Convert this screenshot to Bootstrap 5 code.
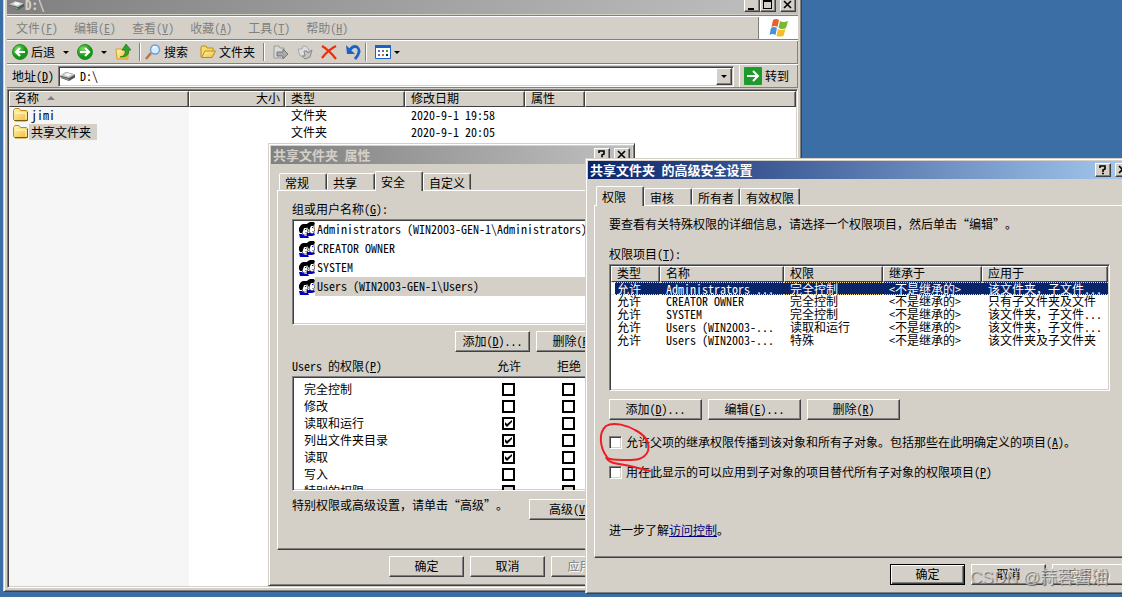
<!DOCTYPE html>
<html lang="zh-CN">
<head>
<meta charset="utf-8">
<meta name="viewport" content="width=device-width, initial-scale=1">
<title>D:\</title>
<link href="https://cdn.jsdelivr.net/npm/bootstrap@5.3.0/dist/css/bootstrap.min.css" rel="stylesheet">
<style>
:root { --face:#d4d0c8; --shade:#808080; --dark:#404040; --navy:#0a246a; }
body { font:12px/16px "Noto Sans CJK SC",sans-serif; font-feature-settings:"hwid"; color:#000; background:#3a6ea5; white-space:nowrap; }
.full { font-feature-settings:normal; }
button, input { font:inherit; font-feature-settings:inherit; color:inherit; }
.desktop { height:100vh; }
.win { background:var(--face); padding:2px; border:1px solid; border-color:var(--face) var(--dark) var(--dark) var(--face); box-shadow:inset 1px 1px #fff, inset -1px -1px var(--shade); }
.win-explorer { left:3px; right:320px; top:-8px; bottom:5px; padding:3px; }
.win-props { left:268px; top:143px; width:367px; }
.win-adv { left:585px; top:158px; width:551px; }
.title { height:18px; padding:0 2px; font-size:13px; font-weight:700; color:var(--face); background:linear-gradient(90deg,#808080,#c0c0c0); }
.title.active { color:#fff; background:linear-gradient(90deg,#0a246a,#a6caf0); }
.cap { width:16px; height:14px; }
.btn3 { background:var(--face); border:1px solid; border-color:#fff var(--dark) var(--dark) #fff; box-shadow:inset -1px -1px var(--shade); padding:0; border-radius:0; }
.push { width:75px; height:21px; line-height:16px; padding-bottom:2px; }
.push.wide { width:93px; }
.push.mid { width:82px; margin-top:2px; }
.push.default { border-color:#000; box-shadow:inset 1px 1px #fff, inset -1px -1px var(--dark), inset -2px -2px var(--shade); }
.push:disabled { color:var(--shade); text-shadow:1px 1px #fff; }
.btn-row { display:flex; gap:6px; margin-top:6px; }
.rebar { border-top:1px solid var(--shade); margin-top:1px; box-shadow:inset -1px 0 var(--shade); }
.band { height:24px; border-top:1px solid #fff; border-bottom:1px solid var(--shade); padding:0 1px 0 5px; }
.menu { gap:16px; padding-left:4px; color:var(--shade); }
.menu a { color:inherit; text-decoration:none; }
.brand { width:40px; background:#fff; border-left:1px solid var(--shade); }
.tool { background:none; border:0; padding:0; gap:3px; display:flex; align-items:center; }
.rule { width:2px; height:18px; border-left:1px solid var(--shade); border-right:1px solid #fff; }
.caret { width:0; height:0; border:3px solid transparent; border-top-color:#000; border-bottom:0; }
.sunken { background:#fff; border:1px solid; border-color:var(--shade) #fff #fff var(--shade); box-shadow:inset 1px 1px var(--dark), inset -1px -1px var(--face); padding:1px; }
.addr { height:21px; margin-right:4px; }
.addr input { border:0; outline:0; padding:0; background:none; min-width:0; }
.files { margin-top:1px; background:linear-gradient(90deg,#f6f6f6 181px,#fff 181px); }
.grid { table-layout:fixed; width:100%; border-collapse:separate; border-spacing:0; }
.grid thead th { height:16px; line-height:12px; padding:0 0 2px 5px; font-weight:400; background:var(--face); border:1px solid; border-color:#fff var(--dark) var(--dark) #fff; box-shadow:inset -1px 0 var(--shade); }
.grid td { padding:0 0 0 6px; overflow:hidden; }
.files td { height:17px; line-height:16px; padding-bottom:1px; }
.files td:first-child { padding-left:4px; }
.fname { padding:0 6px 0 2px; }
.fname.pick { background:var(--face); }
.grid.aces td { height:13px; line-height:11px; padding-bottom:2px; overflow:visible; }
.grid.aces .sel td { color:#fff; background:var(--navy); border-top:1px dotted #f5db95; border-bottom:1px dotted #f5db95; padding-bottom:0; }
.grid.aces .sel td:first-child { background:linear-gradient(90deg,#fff 4px,var(--navy) 4px); }
.pane { padding:7px 6px 6px; }
.tabs { padding-left:2px; border:0; }
.tabs .nav-link { width:48px; height:17px; padding:0 5px; line-height:18px; color:#000; text-align:left; background:var(--face); border:1px solid; border-color:#fff var(--dark) transparent #fff; border-radius:2px 2px 0 0; box-shadow:inset -1px 0 var(--shade); margin:0; }
.tabs .nav-link.active { height:20px; margin-bottom:-1px; border-bottom:0; border-color:#fff var(--dark) #fff #fff; color:#000; background:var(--face); position:relative; }
.tabs .tab-l { width:60px; }
.sheet { border:1px solid; border-color:#fff var(--dark) var(--dark) #fff; box-shadow:inset -1px -1px var(--shade); padding:10px 14px 29px; }
.sheet-adv { padding:10px 16px 19px 14px; }
.gap-s { margin-top:2px; } .gap-m { margin-top:6px; } .gap-l { margin-top:14px; } .gap-xl { margin-top:42px; }
.sunken.people { height:106px; padding-top:0; }
.person { height:19px; padding-left:5px; }
.person span { line-height:17px; padding:0 0 2px 2px; }
.person.sel span { background:var(--face); flex:1; }
.perm { height:115px; overflow:hidden; padding:4px 12px 0 1px; }
.perm th { font-weight:400; padding:0 0 2px 10px; height:17px; line-height:15px; }
.perm td { padding:0; text-align:center; width:60px; }
.perm-head { margin-right:12px; }
.perm-head span + span { width:60px; text-align:center; }
.ace-box { height:127px; }
input[type=checkbox] { appearance:none; width:13px; height:13px; background:#fff; margin:0; display:block; flex:none; }
.perm input { border:2px solid #000; margin:2px auto; }
.perm input:checked { background:#fff url("data:image/svg+xml,%3Csvg xmlns='http://www.w3.org/2000/svg' viewBox='0 0 9 9'%3E%3Cpath d='M1 3v3l2 2 5-5V1L3 5z'/%3E%3C/svg%3E"); }
.perm input:disabled { background-color:var(--face); }
.opt input { border:1px solid; border-color:var(--shade) #fff #fff var(--shade); box-shadow:inset 1px 1px var(--dark), inset -1px -1px var(--face); }
.more a { color:#00007f; }
.note-ring { left:598px; top:421px; }
.credit { right:14px; bottom:6px; font:17px/26px "Liberation Sans","Noto Sans CJK SC",sans-serif; font-feature-settings:normal; color:rgba(225,225,225,.7); text-shadow:1px 1px 1px #666; pointer-events:none; }
svg { flex:none; display:block; }
</style>
</head>
<body>
<svg width="0" height="0" class="position-absolute" aria-hidden="true">
<defs>
<linearGradient id="gold" x2="1" y2="1"><stop stop-color="#fff7b0"/><stop offset="1" stop-color="#f0b93a"/></linearGradient>
<radialGradient id="green" cx=".35" cy=".3"><stop stop-color="#7fdc62"/><stop offset="1" stop-color="#16951c"/></radialGradient>
<symbol id="drive" viewBox="0 0 16 16"><path d="M0 8l6-4 9 2.500v3L9 13 1 10z" fill="#555"/><path d="M0 7.500L6 4l9 2.500L9 10z" fill="#c4c4c4"/><path d="M4 7l3-2 5 1.500L8 8.500z" fill="#f8f8f8"/><path d="M1 8.500l8 2.500v1.500L1 10z" fill="#888"/><path d="M6.500 10.800l2 .6" stroke="#3c3" /></symbol>
<symbol id="folder" viewBox="0 0 16 16"><path d="M.5 12.500v-9l1.500-2h4l1.500 2h6l1 1v8.500l-1 1H2z" fill="url(#gold)" stroke="#b98a1e"/><path d="M2.500 6h10.500v6.500" fill="none" stroke="#fffbd2"/><path d="M2 13.500h12.500V5" fill="none" stroke="#7a5a10"/></symbol>
<symbol id="openfolder" viewBox="0 0 16 16"><path d="M1 13V3l1-1h4l1 2h6v3" fill="#f9dc6b" stroke="#b98a1e"/><path d="M1.500 13.500L5 7h10.500L12 13.500z" fill="url(#gold)" stroke="#b98a1e"/></symbol>
<symbol id="people" viewBox="0 0 16 16"><path d="M8 11h7l1 2-3 1H8z" fill="#0000c0"/><path d="M11 3h4v3l1 2-1 1v2l-2 1-3-2z" fill="#fff" stroke="#000" stroke-width=".6"/><path d="M7 3l2-2 2-1h4l1 2-2 2h-2l-1 2-1 2-2-3z"/><path d="M4 6l4-1v2l1 3-1 1v2H5l-2-2z" fill="#fff" stroke="#000" stroke-width=".6"/><path d="M0 6l2-3 2-1h4l1 2-2 2H5L4 9l-1 2H1L0 9z"/><path d="M0 12h3l3 2h3l1 2H1z" fill="#0000c0"/><path d="M6 7h1v1H6zm7-2h1v1h-1z" fill="#00f"/><path d="M6 10h2v1H6zm7-1h2v1h-2z" fill="#999"/></symbol>
</defs>
</svg>
<main class="desktop position-relative overflow-hidden">

<section class="win win-explorer position-absolute d-flex flex-column" aria-label="D:\">
  <header class="title d-flex align-items-center">
    <svg width="16" height="16"><use href="#drive"/></svg><span class="flex-fill">D:\</span>
    <button class="btn3 cap" aria-label="最小化"><svg width="14" height="12"><path d="M3 9h6v2H3z"/></svg></button>
    <button class="btn3 cap" aria-label="最大化"><svg width="14" height="12"><path d="M2 1h9v9H2zM3 3v6h7V3z" fill-rule="evenodd"/></svg></button>
    <button class="btn3 cap ms-1" aria-label="关闭"><svg width="14" height="12"><path d="M3 2l7 7M10 2L3 9" stroke="#000" stroke-width="1.600"/></svg></button>
  </header>
  <div class="rebar">
    <div class="band d-flex pe-0">
      <nav class="menu d-flex align-items-center flex-fill">
        <a href="#">文件(<u>F</u>)</a><a href="#">编辑(<u>E</u>)</a><a href="#">查看(<u>V</u>)</a><a href="#">收藏(<u>A</u>)</a><a href="#">工具(<u>T</u>)</a><a href="#">帮助(<u>H</u>)</a>
      </nav>
      <div class="brand d-flex align-items-center justify-content-center">
        <svg width="20" height="20" viewBox="0 0 20 20"><path d="M4 2q3-2 6 0L8.500 9q-3-2-6 0z" fill="#e8602c"/><path d="M11 3q3 2 8 0l-2 7q-4 2-7.500 0z" fill="#78b832"/><path d="M2 10q3-2 6 0l-1.500 7q-3-2-6 0z" fill="#4a8fd8"/><path d="M9 11q3 2 7.500 0l-2 7q-4 1-7 0z" fill="#f6be28"/></svg>
      </div>
    </div>
    <div class="band d-flex align-items-center">
      <button class="tool"><svg width="16" height="16" viewBox="0 0 16 16"><circle cx="8" cy="8" r="7.500" fill="url(#green)" stroke="#2a8a24"/><path d="M13 8H4m4-4L4 8l4 4" fill="none" stroke="#fff" stroke-width="2.200"/></svg>后退</button>
      <span class="caret mx-2"></span>
      <button class="tool" aria-label="前进"><svg width="16" height="16" viewBox="0 0 16 16"><circle cx="8" cy="8" r="7.500" fill="url(#green)" stroke="#2a8a24"/><path d="M3 8h9M8 4l4 4-4 4" fill="none" stroke="#fff" stroke-width="2.200"/></svg></button>
      <span class="caret mx-2"></span>
      <button class="tool" aria-label="向上"><svg width="16" height="16" viewBox="0 0 16 16"><path d="M1 5h5l1 1h6v9H2z" fill="url(#gold)" stroke="#d0a030"/><path d="M5 13q6-1 5-7H7l4-6 5 6h-2q0 8-9 7z" fill="#2da32a" stroke="#156b15" stroke-width=".6"/></svg></button>
      <span class="rule ms-2 me-1"></span>
      <button class="tool"><svg width="16" height="16" viewBox="0 0 16 16"><path d="M1 15l5-6" stroke="#b9754a" stroke-width="2.500"/><circle cx="10" cy="5.500" r="4.500" fill="#d4eefc" stroke="#6f9cd0" stroke-width="1.400"/><path d="M8 4q1-2 3-1" fill="none" stroke="#fff"/></svg>搜索</button>
      <button class="tool ms-2 ps-1"><svg width="16" height="16"><use href="#openfolder"/></svg>文件夹</button>
      <span class="rule mx-2"></span>
      <button class="tool" aria-label="移至"><svg width="16" height="16" viewBox="0 0 16 16"><path d="M1 2h5l1 2h4v10H1z" fill="#d8d8d8" stroke="#999"/><path d="M4 8h6V5l5 5-5 5v-3H4z" fill="#aaa" stroke="#777"/></svg></button>
      <button class="tool ms-2" aria-label="复制到"><svg width="16" height="16" viewBox="0 0 16 16"><path d="M1 5h4l1-3h3l3 4v6H3z" fill="#ddd" stroke="#aaa"/><path d="M7 7h3l1 2 4-3-2 7-5 2-3-3h3z" fill="#c4c4c4" stroke="#888"/></svg></button>
      <button class="tool ms-2" aria-label="删除"><svg width="16" height="16" viewBox="0 0 16 16"><path d="M1 2q7 4 14 13M15 2Q7 6 1 14" fill="none" stroke="#e8300c" stroke-width="2.200"/></svg></button>
      <button class="tool ms-2" aria-label="撤消"><svg width="16" height="16" viewBox="0 0 16 16"><path d="M4 7q4-6 8-4 5 4-2 12" fill="none" stroke="#1e62c4" stroke-width="2.800"/><path d="M1 1l1 9h8z" fill="#1e62c4"/></svg></button>
      <span class="rule ms-1 me-2"></span>
      <button class="tool" aria-label="查看"><svg width="16" height="16" viewBox="0 0 16 16"><path d="M.5 1.500h15v13H.5z" fill="#fff" stroke="#1c62c4"/><path d="M0 1h16v3H0z" fill="#1c62c4"/><path d="M3 6h2v2H3zm4 0h2v2H7zm-4 4h2v2H3z" fill="#5a6fc0"/><path d="M11 6h2v2h-2z" fill="#3a3"/><path d="M7 10h2v2H7z" fill="#d63"/><path d="M11 10h2v2h-2z" fill="#124"/></svg><span class="caret"></span></button>
    </div>
    <div class="band d-flex align-items-center">
      <label for="addr" class="pe-1">地址(<u>D</u>)</label>
      <div class="sunken addr d-flex align-items-center flex-fill">
        <svg width="16" height="16"><use href="#drive"/></svg><input id="addr" class="flex-fill ms-1" value="D:\">
        <button class="btn3 cap h-100 d-flex align-items-center justify-content-center" aria-label="展开"><span class="caret"></span></button>
      </div>
      <span class="rule h-100 border-start-0 me-1"></span>
      <button class="tool pe-2"><svg width="18" height="18" viewBox="0 0 18 18"><rect width="18" height="18" rx="1" fill="#1f9a2c"/><path d="M3 9h11M9 4l5 5-5 5" fill="none" stroke="#fff" stroke-width="2"/></svg>转到</button>
    </div>
  </div>
  <div class="sunken files flex-fill">
    <table class="grid">
      <colgroup><col style="width:180px"><col style="width:96px"><col style="width:120px"><col style="width:120px"><col style="width:60px"><col></colgroup>
      <thead><tr><th scope="col"><span class="d-flex align-items-center gap-2">名称 <svg width="8" height="4"><path d="M0 4l4-4 4 4z" fill="#808080"/></svg></span></th><th scope="col" class="text-end pe-1">大小</th><th scope="col">类型</th><th scope="col">修改日期</th><th scope="col">属性</th><th></th></tr></thead>
      <tbody>
        <tr><td><span class="d-flex align-items-center"><svg width="16" height="16"><use href="#folder"/></svg><span class="fname">jimi</span></span></td><td></td><td>文件夹</td><td>2020-9-1 19:58</td><td></td><td></td></tr>
        <tr><td><span class="d-flex align-items-center"><svg width="16" height="16"><use href="#folder"/></svg><span class="fname pick">共享文件夹</span></span></td><td></td><td>文件夹</td><td>2020-9-1 20:05</td><td></td><td></td></tr>
      </tbody>
    </table>
  </div>
</section>

<section class="win win-props position-absolute" aria-label="共享文件夹 属性">
  <header class="title d-flex align-items-center"><span class="flex-fill">共享文件夹 属性</span>
    <button class="btn3 cap" aria-label="帮助"><svg width="14" height="12"><path d="M4 4V2h5v3L7 6v2M6 9.500h2" fill="none" stroke="#000" stroke-width="1.600"/></svg></button>
    <button class="btn3 cap ms-1" aria-label="关闭"><svg width="14" height="12"><path d="M3 2l7 7M10 2L3 9" stroke="#000" stroke-width="1.600"/></svg></button>
  </header>
  <div class="pane">
    <div class="nav nav-tabs tabs align-items-end" role="tablist">
      <button class="nav-link" role="tab">常规</button><button class="nav-link" role="tab">共享</button><button class="nav-link active" role="tab" aria-selected="true">安全</button><button class="nav-link" role="tab">自定义</button>
    </div>
    <div class="sheet">
      <div>组或用户名称(<u>G</u>):</div>
      <div class="sunken people gap-s">
        <div class="person d-flex align-items-center"><svg width="16" height="16"><use href="#people"/></svg><span>Administrators (WIN2003-GEN-1\Administrators)</span></div>
        <div class="person d-flex align-items-center"><svg width="16" height="16"><use href="#people"/></svg><span>CREATOR OWNER</span></div>
        <div class="person d-flex align-items-center"><svg width="16" height="16"><use href="#people"/></svg><span>SYSTEM</span></div>
        <div class="person sel d-flex align-items-center"><svg width="16" height="16"><use href="#people"/></svg><span>Users (WIN2003-GEN-1\Users)</span></div>
      </div>
      <div class="btn-row justify-content-end"><button class="btn3 push">添加(<u>D</u>)...</button><button class="btn3 push">删除(<u>R</u>)</button></div>
      <div class="perm-head d-flex gap-m"><span class="flex-fill">Users 的权限(<u>P</u>)</span><span>允许</span><span>拒绝</span></div>
      <div class="sunken perm gap-s">
        <table class="w-100"><tbody>
          <tr><th scope="row">完全控制</th><td><input type="checkbox" aria-label="允许"></td><td><input type="checkbox" aria-label="拒绝"></td></tr>
          <tr><th scope="row">修改</th><td><input type="checkbox" aria-label="允许"></td><td><input type="checkbox" aria-label="拒绝"></td></tr>
          <tr><th scope="row">读取和运行</th><td><input type="checkbox" checked aria-label="允许"></td><td><input type="checkbox" aria-label="拒绝"></td></tr>
          <tr><th scope="row">列出文件夹目录</th><td><input type="checkbox" checked aria-label="允许"></td><td><input type="checkbox" aria-label="拒绝"></td></tr>
          <tr><th scope="row">读取</th><td><input type="checkbox" checked aria-label="允许"></td><td><input type="checkbox" aria-label="拒绝"></td></tr>
          <tr><th scope="row">写入</th><td><input type="checkbox" aria-label="允许"></td><td><input type="checkbox" aria-label="拒绝"></td></tr>
          <tr><th scope="row">特别的权限</th><td><input type="checkbox" disabled aria-label="允许"></td><td><input type="checkbox" disabled aria-label="拒绝"></td></tr>
        </tbody></table>
      </div>
      <div class="d-flex justify-content-between gap-m"><span>特别权限或高级设置<span class="full">，</span>请单击“高级”。</span><button class="btn3 push mid">高级(<u>V</u>)</button></div>
    </div>
    <div class="btn-row justify-content-end"><button class="btn3 push">确定</button><button class="btn3 push">取消</button><button class="btn3 push" disabled>应用(<u>A</u>)</button></div>
  </div>
</section>

<section class="win win-adv position-absolute" aria-label="共享文件夹 的高级安全设置">
  <header class="title active d-flex align-items-center"><span class="flex-fill">共享文件夹 的高级安全设置</span>
    <button class="btn3 cap" aria-label="帮助"><svg width="14" height="12"><path d="M4 4V2h5v3L7 6v2M6 9.500h2" fill="none" stroke="#000" stroke-width="1.600"/></svg></button>
    <button class="btn3 cap ms-1" aria-label="关闭"><svg width="14" height="12"><path d="M3 2l7 7M10 2L3 9" stroke="#000" stroke-width="1.600"/></svg></button>
  </header>
  <div class="pane">
    <div class="nav nav-tabs tabs align-items-end" role="tablist">
      <button class="nav-link active" role="tab" aria-selected="true">权限</button><button class="nav-link" role="tab">审核</button><button class="nav-link" role="tab">所有者</button><button class="nav-link tab-l" role="tab">有效权限</button>
    </div>
    <div class="sheet sheet-adv">
      <div>要查看有关特殊权限的详细信息<span class="full">，</span>请选择一个权限项目<span class="full">，</span>然后单击“编辑”。</div>
      <div class="gap-l">权限项目(<u>T</u>):</div>
      <div class="sunken ace-box gap-s">
        <table class="grid aces">
          <colgroup><col style="width:49px"><col style="width:124px"><col style="width:99px"><col style="width:99px"><col></colgroup>
          <thead><tr><th scope="col">类型</th><th scope="col">名称</th><th scope="col">权限</th><th scope="col">继承于</th><th scope="col">应用于</th></tr></thead>
          <tbody>
            <tr class="sel"><td>允许</td><td>Administrators ...</td><td>完全控制</td><td>&lt;不是继承的&gt;</td><td>该文件夹<span class="full">，</span>子文件...</td></tr>
            <tr><td>允许</td><td>CREATOR OWNER</td><td>完全控制</td><td>&lt;不是继承的&gt;</td><td>只有子文件夹及文件</td></tr>
            <tr><td>允许</td><td>SYSTEM</td><td>完全控制</td><td>&lt;不是继承的&gt;</td><td>该文件夹<span class="full">，</span>子文件...</td></tr>
            <tr><td>允许</td><td>Users (WIN2003-...</td><td>读取和运行</td><td>&lt;不是继承的&gt;</td><td>该文件夹<span class="full">，</span>子文件...</td></tr>
            <tr><td>允许</td><td>Users (WIN2003-...</td><td>特殊</td><td>&lt;不是继承的&gt;</td><td>该文件夹及子文件夹</td></tr>
          </tbody>
        </table>
      </div>
      <div class="btn-row mt-2"><button class="btn3 push wide">添加(<u>D</u>)...</button><button class="btn3 push wide">编辑(<u>E</u>)...</button><button class="btn3 push wide">删除(<u>R</u>)</button></div>
      <div class="opt d-flex align-items-center gap-1 gap-l"><input type="checkbox" id="inh"><label for="inh">允许父项的继承权限传播到该对象和所有子对象。包括那些在此明确定义的项目(<u>A</u>)。</label></div>
      <div class="opt d-flex align-items-center gap-1 gap-l"><input type="checkbox" id="rep"><label for="rep">用在此显示的可以应用到子对象的项目替代所有子对象的权限项目(<u>P</u>)</label></div>
      <div class="more gap-xl">进一步了解<a href="#">访问控制</a>。</div>
    </div>
    <div class="btn-row justify-content-end"><button class="btn3 push default">确定</button><button class="btn3 push">取消</button><button class="btn3 push" disabled>应用(<u>A</u>)</button></div>
  </div>
</section>

<svg class="note-ring position-absolute" width="56" height="54" viewBox="0 0 56 54" fill="none" stroke="#ee1c25" stroke-width="2" stroke-linecap="round"><path d="M9 36C2 27 0 12 8 5c8-5 22 0 29 4 10 5 15 12 13 21-4 10-15 9-25 9-6-1-13 1-17-3 3 8 14 6 24 9l20 5"/></svg>
<div class="credit position-absolute">CSDN @蒜蓉酱油</div>
</main>
<script src="https://cdn.jsdelivr.net/npm/bootstrap@5.3.0/dist/js/bootstrap.bundle.min.js"></script>
</body>
</html>
